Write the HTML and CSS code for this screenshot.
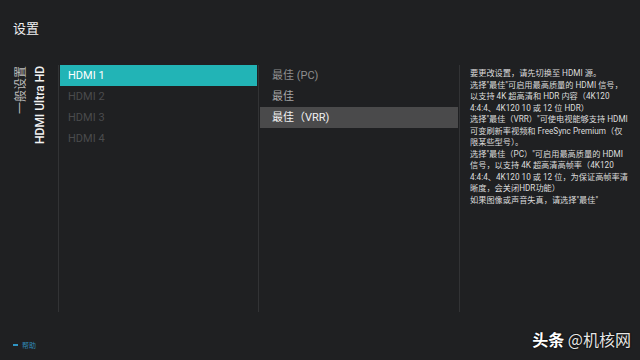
FILE: index.html
```html
<!DOCTYPE html>
<html lang="zh-CN">
<head>
<meta charset="utf-8">
<title>设置</title>
<link rel="stylesheet" href="styles.css">
</head>
<body>
<div class="screen">
  <header class="header">设置</header>
  <main class="main">
    <aside class="side">
      <div class="vtext vtext-cat">一般设置</div>
      <div class="vtext vtext-sub">HDMI Ultra HD</div>
    </aside>
    <section class="col col-sources">
      <div class="item item-active">HDMI 1</div>
      <div class="item item-dim">HDMI 2</div>
      <div class="item item-dim">HDMI 3</div>
      <div class="item item-dim">HDMI 4</div>
    </section>
    <section class="col col-options">
      <div class="opt opt-pc">最佳 (PC)</div>
      <div class="opt opt-best">最佳</div>
      <div class="opt opt-sel">最佳（VRR)</div>
    </section>
    <section class="col col-info">
      <p class="info">要更改设置，请先切换至 HDMI 源。<br>选择&quot;最佳&quot;可启用最高质量的 HDMI 信号，<br>以支持 4K 超高清和 HDR 内容（4K120<br>4:4:4、4K120 10 或 12 位 HDR）<br>选择&quot;最佳（VRR）&quot;可使电视能够支持 HDMI<br>可变刷新率视频和 FreeSync Premium（仅<br>限某些型号）。<br>选择&quot;最佳（PC）&quot;可启用最高质量的 HDMI<br>信号，以支持 4K 超高清高帧率（4K120<br>4:4:4、4K120 10 或 12 位，为保证高帧率清<br>晰度，会关闭HDR功能）<br>如果图像或声音失真，请选择&quot;最佳&quot;</p>
    </section>
  </main>
  <footer class="footer">
    <div class="help"><span class="help-dash"></span><span class="help-text">帮助</span></div>
    <div class="mark"><span class="mark-a">头条</span> <span class="mark-b">@机核网</span></div>
  </footer>
</div>
</body>
</html>
```
FILE: styles.css
```css
html, body {
  margin: 0;
  padding: 0;
  background: #1f2022;
}
.screen {
  width: 640px;
  height: 360px;
  display: flex;
  flex-direction: column;
  background: #1f2022;
  color: #e8e8e8;
  font-family: Roboto, "Noto Sans CJK SC", sans-serif;
  overflow: hidden;
}
.header {
  height: 65px;
  box-sizing: border-box;
  padding: 19px 0 0 13px;
  font-size: 13px;
  line-height: 18px;
  font-family: "Noto Sans CJK SC", sans-serif;
  color: #f0f0f0;
}
.main {
  display: flex;
  height: 247px;
}
.side {
  width: 58px;
  display: flex;
  align-items: flex-start;
  padding-left: 14px;
  box-sizing: border-box;
  gap: 8px;
  padding-top: 1px;
}
.vtext {
  writing-mode: vertical-rl;
  text-orientation: sideways;
  transform: rotate(180deg);
  white-space: nowrap;
}
.vtext-cat {
  font-family: "Noto Sans CJK SC", sans-serif;
  font-size: 12px;
  line-height: 12px;
  color: #bcbcbc;
}
.vtext-sub {
  font-size: 12px;
  line-height: 13px;
  font-weight: 500;
  color: #f2f2f2;
}
.col {
  box-sizing: border-box;
}
.col-sources {
  width: 201px;
  border-left: 1px solid #323335;
  border-right: 1px solid #323335;
  padding: 0 1px;
}
.item {
  height: 21px;
  line-height: 21px;
  padding-left: 8px;
  font-size: 11px;
}
.item-active {
  background: #22b4b6;
  color: #ffffff;
}
.item-dim {
  color: #4a4b4d;
}
.col-options {
  width: 201px;
  border-right: 1px solid #323335;
  padding: 0 1px 0 1px;
}
.opt {
  height: 21px;
  line-height: 21px;
  padding-left: 12px;
  font-size: 11px;
  font-family: Roboto, "Noto Sans CJK SC", sans-serif;
}
.opt-pc {
  color: #8e8e8e;
}
.opt-best {
  color: #a6a6a6;
}
.opt-sel {
  background: #4a4a4b;
  color: #f0f0f0;
}
.col-info {
  flex: 1;
  padding: 3px 0 0 10px;
}
.info {
  margin: 0;
  font-size: 8.2px;
  line-height: 11.55px;
  color: #dcdcdc;
  white-space: nowrap;
  font-family: Roboto, "Noto Sans CJK SC", sans-serif;
}
.footer {
  flex: 1;
  display: flex;
  justify-content: space-between;
  align-items: flex-end;
  padding: 0 9px 9px 13px;
}
.help {
  display: flex;
  align-items: center;
  gap: 4px;
  margin-bottom: 2px;
}
.help-dash {
  width: 5px;
  height: 2px;
  background: #2f95c4;
}
.help-text {
  font-family: "Noto Sans CJK SC", sans-serif;
  font-size: 7px;
  line-height: 8px;
  color: #2f88b4;
}
.mark {
  font-family: "Noto Sans CJK SC", sans-serif;
  font-size: 16px;
  line-height: 18px;
  white-space: nowrap;
  margin-bottom: 3px;
}
.mark-a {
  color: #ffffff;
  font-weight: 700;
  text-shadow: 0 0 2px #000;
}
.mark-b {
  color: #e6e6e6;
  text-shadow: 0 0 2px #000, 0 0 1px #000;
}
```
